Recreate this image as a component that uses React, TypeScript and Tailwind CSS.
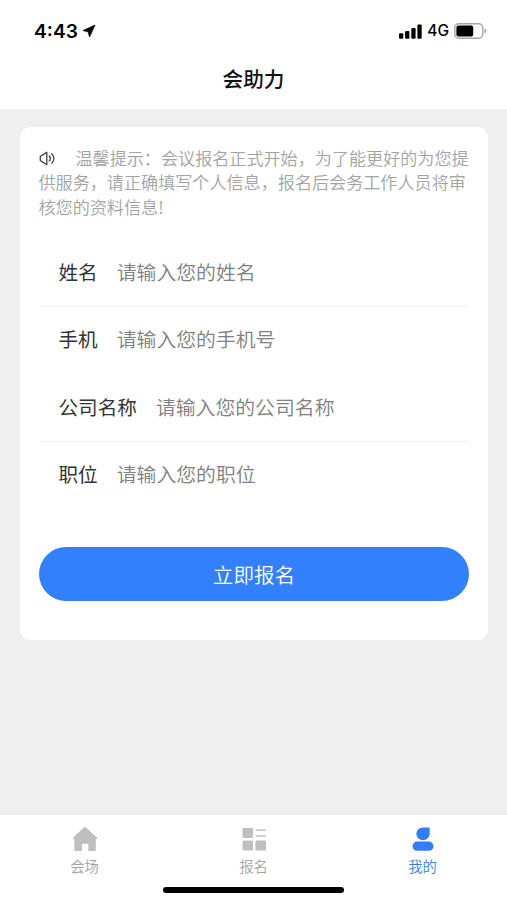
interface Field {
  name: string;
  label: string;
  placeholder: string;
  divider: boolean;
}

const fields: Field[] = [
  { name: 'name', label: '姓名', placeholder: '请输入您的姓名', divider: true },
  { name: 'phone', label: '手机', placeholder: '请输入您的手机号', divider: false },
  { name: 'company', label: '公司名称', placeholder: '请输入您的公司名称', divider: true },
  { name: 'position', label: '职位', placeholder: '请输入您的职位', divider: false },
];

function StatusBar() {
  return (
    <div className="flex h-[62px] items-center justify-between pl-[34px] pr-5 font-['Inter','Liberation_Sans',sans-serif] text-black">
      <div className="flex items-center gap-1">
        <span className="text-[19.2px] font-semibold leading-6">4:43</span>
        <svg width="14" height="14" viewBox="0 0 14 14" fill="currentColor">
          <path
            d="M13 1 7.6 13 6 7.8.9 6.6Z"
            stroke="currentColor"
            strokeWidth=".7"
            strokeLinejoin="round"
          />
        </svg>
      </div>
      <div className="flex items-center">
        <svg width="23" height="15" viewBox="0 0 23 15" fill="currentColor">
          <rect x="0" y="9.3" width="4.3" height="5.4" rx="1" />
          <rect x="6.1" y="6.9" width="4.3" height="7.8" rx="1" />
          <rect x="12.3" y="4" width="4.3" height="10.7" rx="1" />
          <rect x="18.4" y="0.5" width="4.3" height="14.2" rx="1" />
        </svg>
        <span className="ml-[5px] text-[15.5px] font-medium leading-5">4G</span>
        <svg className="ml-[5px]" width="33" height="16" viewBox="0 0 33 16">
          <rect x=".8" y=".8" width="28" height="14.4" rx="4" fill="none" stroke="#a6a6a6" strokeWidth="1.4" />
          <rect x="2.4" y="2.6" width="16.8" height="10.8" rx="2" fill="#000" />
          <path d="M30.4 5.6c2.6.8 2.6 4 0 4.8Z" fill="#a6a6a6" />
        </svg>
      </div>
    </div>
  );
}

function SpeakerIcon() {
  return (
    <svg
      className="mr-[20px] inline-block align-[-1px]"
      width="17"
      height="15"
      viewBox="0 0 17 15"
      fill="none"
      stroke="#444"
      strokeWidth="1.3"
      strokeLinecap="round"
      strokeLinejoin="round"
    >
      <path d="M2.6 4.6 7.8 1.3v12.4L2.6 10.4 1.3 9.7V5.3Z" />
      <path d="M10.3 5c1.3 1.5 1.3 3.5 0 5" />
      <path d="M12.7 2.6c2.9 2.9 2.9 6.9 0 9.8" />
    </svg>
  );
}

function HomeIcon() {
  return (
    <svg width="26" height="26" viewBox="0 0 26 26" fill="#bfbfbf">
      <path d="M12.2 1.3a1.2 1.2 0 0 1 1.6 0L24.8 11.6c.7.7.4 1.7-.5 1.7h-.5v10.6c0 .7-.4 1.1-1.1 1.1h-6.4v-6.2c0-.7-.4-1.1-1.1-1.1h-4.2c-.7 0-1.1.4-1.1 1.1V25H3.5c-.7 0-1.1-.4-1.1-1.1V13.3h-.7c-.9 0-1.2-1-.5-1.7Z" />
    </svg>
  );
}

function SignUpIcon() {
  return (
    <svg width="26" height="26" viewBox="0 0 26 26" fill="#bfbfbf">
      <rect x="1.5" y="2" width="10.6" height="10" rx="1.2" />
      <rect x="1.5" y="14.5" width="10.6" height="10" rx="1.2" />
      <rect x="14.4" y="14.5" width="10.6" height="10" rx="1.2" />
      <rect x="14.6" y="3.4" width="10.2" height="1.5" />
      <rect x="14.6" y="9.3" width="10.2" height="1.5" />
    </svg>
  );
}

function MineIcon() {
  return (
    <svg width="26" height="26" viewBox="0 0 26 26" fill="#347df6">
      <path d="M13 1.4h6.2c.3 0 .5.2.5.5v5.9A6.7 6.4 0 1 1 13 1.4Z" />
      <rect x="2.6" y="15.6" width="20.8" height="9.2" rx="4.4" />
    </svg>
  );
}

const tabs = [
  { label: '会场', icon: <HomeIcon />, active: false },
  { label: '报名', icon: <SignUpIcon />, active: false },
  { label: '我的', icon: <MineIcon />, active: true },
];

export default function App() {
  return (
    <div
      lang="zh-CN"
      className="flex h-[900px] w-full flex-col overflow-hidden bg-[#efefef] font-['Noto_Sans_CJK_SC',sans-serif]"
    >
      {/* Header */}
      <header className="h-[109px] shrink-0 bg-white">
        <StatusBar />
        <h1 className="text-center text-[20.6px] font-medium leading-[32px] text-[#111]">会助力</h1>
      </header>

      {/* Form card */}
      <main className="flex-1 px-[19.5px] pt-[18px]">
        <form className="h-[513px] rounded-[11px] bg-white px-[19px] pt-[19px]">
          <p className="-mr-1 text-[17.1px] font-[350] leading-[24.4px] text-[#a3a3a3]">
            <SpeakerIcon />
            温馨提示：会议报名正式开始，为了能更好的为您提
            <br />
            供服务，请正确填写个人信息，报名后会务工作人员将审
            <br />
            核您的资料信息!
          </p>

          <div className="mt-[20.3px]">
            {fields.map((field) => (
              <label
                key={field.name}
                className={`flex h-[67.4px] items-center gap-[19px] border-b pb-[2px] pl-5 text-[19.6px] ${
                  field.divider ? 'border-[#f0f0f0]' : 'border-transparent'
                }`}
              >
                <span className="shrink-0 text-[#333]">{field.label}</span>
                <input
                  name={field.name}
                  placeholder={field.placeholder}
                  className="min-w-0 flex-1 bg-transparent text-[19.85px] font-[350] outline-none placeholder:text-[#808080]"
                />
              </label>
            ))}
          </div>

          <button
            type="button"
            className="mt-[38px] h-[54px] w-full rounded-full bg-[#3280fc] pl-px text-[20.6px] font-[350] text-white"
          >
            立即报名
          </button>
        </form>
      </main>

      {/* Tab bar */}
      <footer className="flex h-[86px] shrink-0 flex-col items-center border-t border-[#e9e9e9] bg-white">
        <nav className="flex w-full">
          {tabs.map((tab) => (
            <a key={tab.label} className="flex flex-1 flex-col items-center pt-[11px]">
              {tab.icon}
              <span
                className={`mt-[4px] text-[14.3px] font-[350] leading-[20px] ${
                  tab.active ? 'text-[#3c80dc]' : 'text-[#a3a3a3]'
                }`}
              >
                {tab.label}
              </span>
            </a>
          ))}
        </nav>
        <div className="mt-[10.5px] h-[6px] w-[181px] rounded-full bg-black" />
      </footer>
    </div>
  );
}
